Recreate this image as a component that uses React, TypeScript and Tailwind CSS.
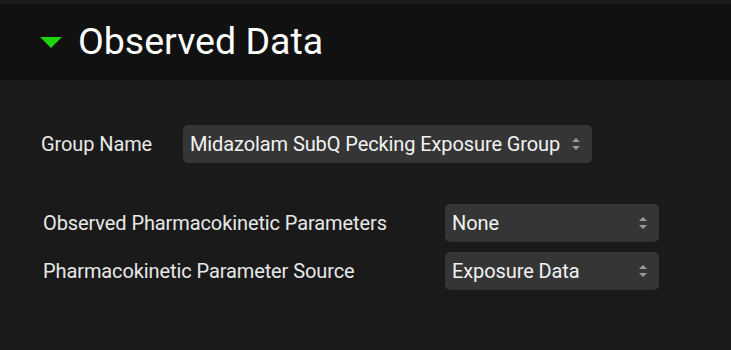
import React from 'react';

const Arrows: React.FC = () => (
  <svg width="10" height="16" viewBox="0 0 10 16" className="shrink-0">
    <path d="M5 2 L9 6 H1 Z" fill="#9a9a9a" />
    <path d="M5 14 L9 10 H1 Z" fill="#9a9a9a" />
  </svg>
);

interface SelectBoxProps {
  value: string;
  className?: string;
}

const SelectBox: React.FC<SelectBoxProps> = ({ value, className = '' }) => (
  <div
    className={`h-[38px] bg-[#353535] rounded-[5px] flex items-center justify-between pl-[7px] pr-[11px] text-[20px] text-[#f2f2f2] ${className}`}
  >
    <span className="tracking-[-0.1px]">{value}</span>
    <Arrows />
  </div>
);

export default function App() {
  return (
    <div
      className="w-[731px] h-[350px] bg-[#1a1a1a] pt-[4px] overflow-hidden"
      style={{ fontFamily: 'Roboto, "Liberation Sans", sans-serif' }}
    >
      {/* Section header */}
      <div className="h-[76px] bg-[#111111] flex items-center pl-[40px]">
        <svg width="22" height="11" viewBox="0 0 22 11" className="mr-[16px] mt-[1px]">
          <path d="M0 0 H22 L11 11 Z" fill="#1ed40e" />
        </svg>
        <span className="text-[37.5px] text-white leading-none">Observed Data</span>
      </div>

      {/* Group name */}
      <div className="flex items-center mt-[45px] pl-[41px]">
        <span className="w-[142px] text-[20px] text-[#e8e8e8] tracking-[-0.1px]">Group Name</span>
        <SelectBox value="Midazolam SubQ Pecking Exposure Group" className="w-[409px]" />
      </div>

      {/* PK parameters */}
      <div className="flex flex-col gap-[10px] mt-[41px] pl-[43px]">
        <div className="flex items-center">
          <span className="w-[402px] text-[20px] text-[#e8e8e8] tracking-[-0.1px]">Observed Pharmacokinetic Parameters</span>
          <SelectBox value="None" className="w-[214px]" />
        </div>
        <div className="flex items-center">
          <span className="w-[402px] text-[20px] text-[#e8e8e8] tracking-[-0.1px]">Pharmacokinetic Parameter Source</span>
          <SelectBox value="Exposure Data" className="w-[214px]" />
        </div>
      </div>
    </div>
  );
}
